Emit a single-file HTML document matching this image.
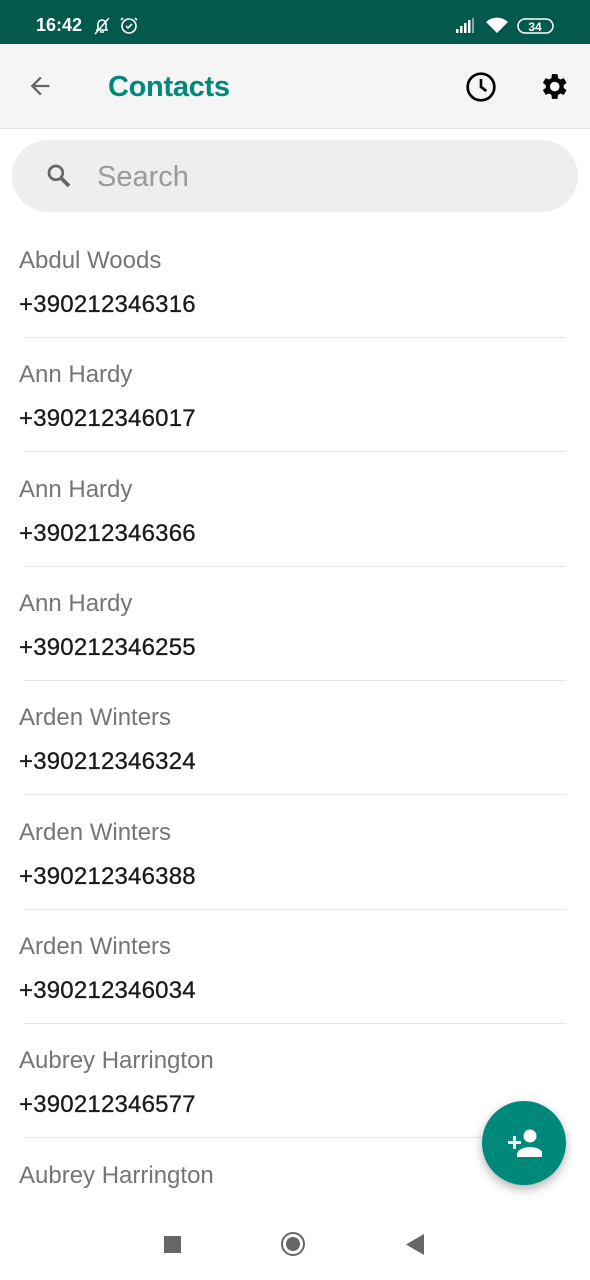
<!DOCTYPE html><html><head><style>
body{margin:0;width:590px;height:1280px;overflow:hidden;background:#fff;font-family:"Liberation Sans",sans-serif;position:relative}
.sb{position:absolute;top:0;left:0;width:590px;height:44px;background:#02594c;color:#fff}
.ab{position:absolute;top:44px;left:0;width:590px;height:84px;background:#f5f5f5;border-bottom:1px solid #e4e4e4}
.search{position:absolute;left:12px;top:140px;width:566px;height:72px;border-radius:36px;background:#eeeeee}
.row{position:absolute;left:0;width:590px;height:114px}
.nm{position:absolute;left:19px;top:23px;font-size:24px;color:#757575}
.ph{position:absolute;left:19px;top:67px;font-size:24px;color:#1a1a1a;letter-spacing:.2px;-webkit-text-stroke:.3px #1a1a1a}
.sep{position:absolute;left:24px;right:24px;bottom:0;height:1px;background:#e6e6e6}
</style></head><body>
<div class="sb"><span style="position:absolute;left:36px;top:15px;font-size:18px;font-weight:bold">16:42</span>
<svg style="position:absolute;left:92px;top:15px" width="48" height="22" viewBox="0 0 48 22" fill="none" stroke="#fff" stroke-width="1.6"><path d="M4 15h12M6 15V9a4 4 0 0 1 8 0v6M8 17h4M3 19L17 3"/><circle cx="37" cy="11" r="7"/><path d="M34 11l2 2 4-4M31 3l-2 2M43 3l2 2"/></svg>
<svg style="position:absolute;left:455px;top:16px" width="100" height="20" viewBox="0 0 100 20"><g fill="#fff"><rect x="1" y="13" width="2.5" height="4"/><rect x="5" y="10" width="2.5" height="7"/><rect x="9" y="7" width="2.5" height="10"/><rect x="13" y="4" width="2.5" height="13"/><rect x="17" y="2" width="2" height="15" opacity=".5"/><path d="M42 17l-11-11a16 16 0 0 1 22 0z"/></g><rect x="63" y="3" width="35" height="14" rx="7" fill="none" stroke="#fff" stroke-width="1.5"/><text x="80" y="15" font-size="12" font-weight="bold" fill="#fff" text-anchor="middle" font-family="Liberation Sans">34</text></svg></div>
<div class="ab">
<svg style="position:absolute;left:26px;top:28px" width="28" height="28" viewBox="0 0 24 24"><path d="M20 11H7.8l5.6-5.6L12 4l-8 8 8 8 1.4-1.4L7.8 13H20z" fill="#666"/></svg>
<span style="position:absolute;left:108px;top:27px;font-size:29px;color:#00897b;font-weight:bold;letter-spacing:-.3px">Contacts</span>
<svg style="position:absolute;left:465px;top:27px" width="32" height="32" viewBox="0 0 24 24" fill="none" stroke="#000" stroke-width="2"><circle cx="12" cy="12" r="10"/><path d="M12 6v6l4 3"/></svg>
<svg style="position:absolute;left:537px;top:26px" width="33" height="33" viewBox="0 0 24 24"><path fill="#000" d="M19.4 13a7.5 7.5 0 0 0 0-2l2.1-1.6-2-3.5-2.5 1a7 7 0 0 0-1.7-1L14.9 3h-4l-.4 2.9a7 7 0 0 0-1.7 1l-2.5-1-2 3.5L6.4 11a7.5 7.5 0 0 0 0 2l-2.1 1.6 2 3.5 2.5-1a7 7 0 0 0 1.7 1l.4 2.9h4l.4-2.9a7 7 0 0 0 1.7-1l2.5 1 2-3.5zM12.9 15.5a3.5 3.5 0 1 1 0-7 3.5 3.5 0 0 1 0 7z"/></svg></div>
<div class="search"><svg style="position:absolute;left:32px;top:21px" width="30" height="30" viewBox="0 0 24 24" fill="none" stroke="#666"><circle cx="9.5" cy="9.5" r="5.5" stroke-width="2.2"/><path d="M13.5 13.5l6.5 6.5" stroke-width="3"/></svg><span style="position:absolute;left:85px;top:21px;font-size:29px;color:#9a9a9a">Search</span></div>
<div class="row" style="top:224px"><div class="nm">Abdul Woods</div><div class="ph">+390212346316</div><div class="sep"></div></div>
<div class="row" style="top:338px"><div class="nm">Ann Hardy</div><div class="ph">+390212346017</div><div class="sep"></div></div>
<div class="row" style="top:453px"><div class="nm">Ann Hardy</div><div class="ph">+390212346366</div><div class="sep"></div></div>
<div class="row" style="top:567px"><div class="nm">Ann Hardy</div><div class="ph">+390212346255</div><div class="sep"></div></div>
<div class="row" style="top:681px"><div class="nm">Arden Winters</div><div class="ph">+390212346324</div><div class="sep"></div></div>
<div class="row" style="top:796px"><div class="nm">Arden Winters</div><div class="ph">+390212346388</div><div class="sep"></div></div>
<div class="row" style="top:910px"><div class="nm">Arden Winters</div><div class="ph">+390212346034</div><div class="sep"></div></div>
<div class="row" style="top:1024px"><div class="nm">Aubrey Harrington</div><div class="ph">+390212346577</div><div class="sep"></div></div>
<div class="row" style="top:1139px"><div class="nm">Aubrey Harrington</div></div>
<div style="position:absolute;left:482px;top:1101px;width:84px;height:84px;border-radius:50%;background:#00897b;box-shadow:0 4px 10px rgba(0,0,0,.3)"><svg style="position:absolute;left:24px;top:26px" width="36" height="32" viewBox="0 0 36 32"><path fill="#fff" d="M2 14h5v-5h3v5h5v3h-5v5H7v-5H2z"/><circle cx="24" cy="9" r="6.5" fill="#fff"/><path fill="#fff" d="M11 28c0-6 8-8 13-8s13 2 13 8v2H11z"/></svg></div>
<div style="position:absolute;top:1210px;left:0;width:590px;height:70px;background:#fff"></div>
<div style="position:absolute;left:164px;top:1236px;width:17px;height:17px;background:#666"></div>
<div style="position:absolute;left:281px;top:1232px;width:20px;height:20px;border:2.5px solid #666;border-radius:50%"><div style="position:absolute;left:3px;top:3px;width:14px;height:14px;border-radius:50%;background:#666"></div></div>
<svg style="position:absolute;left:406px;top:1234px" width="19" height="21"><path d="M0 10.5L18 0v21z" fill="#666"/></svg>
</body></html>
